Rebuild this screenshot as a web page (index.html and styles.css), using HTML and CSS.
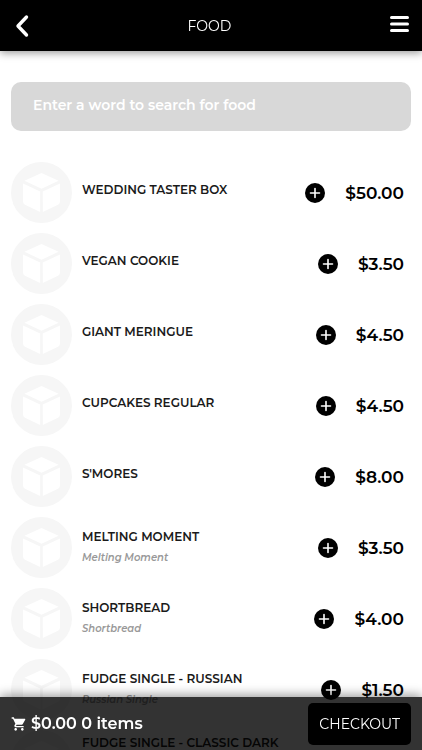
FILE: index.html
```html
<!DOCTYPE html>
<html lang="en">
<head>
    <meta charset="UTF-8">
    <meta name="viewport" content="width=device-width, initial-scale=1">
    <title>Food</title>
    <link rel="stylesheet" href="styles.css">
</head>
<body>
<!-- shared shapes -->
<svg class="defs" aria-hidden="true">
    <symbol id="box" viewBox="0 0 61 61">
        <circle cx="30.5" cy="30.5" r="30.5" fill="#f6f6f6"/>
        <path d="M30.500 11 47.500 18.800 30.500 26.800 13.500 18.800Z" fill="#fff"/>
        <path d="M12 21.500 29.200 29.500V50L14 42.700Q12 41.700 12 39.500Z" fill="#fff"/>
        <path d="M49 21.500 31.800 29.500V50L47 42.700Q49 41.700 49 39.500Z" fill="#fff"/>
    </symbol>
    <symbol id="plus" viewBox="0 0 20 20">
        <circle cx="10" cy="10" r="10" fill="#000"/>
        <path d="M10 5.500V14.500M5.500 10H14.500" stroke="#fff" stroke-width="1.6" stroke-linecap="round"/>
    </symbol>
</svg>

<header class="header">
    <button class="icon-btn" type="button" aria-label="Back">
        <svg width="14" height="22" viewBox="0 0 14 22"><path d="M11.500 2 3 11 11.500 20" fill="none" stroke="#fff" stroke-width="3.400" stroke-linecap="round" stroke-linejoin="round"/></svg>
    </button>
    <h1 class="title">FOOD</h1>
    <button class="icon-btn menu-btn" type="button" aria-label="Menu">
        <svg width="19" height="18" viewBox="0 0 19 18"><path d="M1.500 2.500H17.500M1.500 9H17.500M1.500 15.500H17.500" stroke="#fff" stroke-width="3" stroke-linecap="round"/></svg>
    </button>
</header>

<main class="content">
    <input class="search" type="search" aria-label="Search for food" placeholder="Enter a word to search for food">
    <ul class="list">
        <li class="item">
            <svg class="thumb"><use href="#box"/></svg>
            <div class="details"><h2 class="name">WEDDING TASTER BOX</h2></div>
            <button class="add" type="button" aria-label="Add"><svg><use href="#plus"/></svg></button>
            <span class="price">$50.00</span>
        </li>
        <li class="item">
            <svg class="thumb"><use href="#box"/></svg>
            <div class="details"><h2 class="name">VEGAN COOKIE</h2></div>
            <button class="add" type="button" aria-label="Add"><svg><use href="#plus"/></svg></button>
            <span class="price">$3.50</span>
        </li>
        <li class="item">
            <svg class="thumb"><use href="#box"/></svg>
            <div class="details"><h2 class="name">GIANT MERINGUE</h2></div>
            <button class="add" type="button" aria-label="Add"><svg><use href="#plus"/></svg></button>
            <span class="price">$4.50</span>
        </li>
        <li class="item">
            <svg class="thumb"><use href="#box"/></svg>
            <div class="details"><h2 class="name">CUPCAKES REGULAR</h2></div>
            <button class="add" type="button" aria-label="Add"><svg><use href="#plus"/></svg></button>
            <span class="price">$4.50</span>
        </li>
        <li class="item">
            <svg class="thumb"><use href="#box"/></svg>
            <div class="details"><h2 class="name">S'MORES</h2></div>
            <button class="add" type="button" aria-label="Add"><svg><use href="#plus"/></svg></button>
            <span class="price">$8.00</span>
        </li>
        <li class="item">
            <svg class="thumb"><use href="#box"/></svg>
            <div class="details"><h2 class="name">MELTING MOMENT</h2><p class="desc">Melting Moment</p></div>
            <button class="add" type="button" aria-label="Add"><svg><use href="#plus"/></svg></button>
            <span class="price">$3.50</span>
        </li>
        <li class="item">
            <svg class="thumb"><use href="#box"/></svg>
            <div class="details"><h2 class="name">SHORTBREAD</h2><p class="desc">Shortbread</p></div>
            <button class="add" type="button" aria-label="Add"><svg><use href="#plus"/></svg></button>
            <span class="price">$4.00</span>
        </li>
        <li class="item">
            <svg class="thumb"><use href="#box"/></svg>
            <div class="details"><h2 class="name">FUDGE SINGLE - RUSSIAN</h2><p class="desc">Russian Single</p></div>
            <button class="add" type="button" aria-label="Add"><svg><use href="#plus"/></svg></button>
            <span class="price">$1.50</span>
        </li>
        <li class="item">
            <svg class="thumb"><use href="#box"/></svg>
            <div class="details details-long"><h2 class="name">FUDGE SINGLE - CLASSIC DARK</h2></div>
        </li>
    </ul>
</main>

<footer class="footer">
    <svg class="cart" viewBox="0 0 24 24"><path fill="#fff" d="M7 18c-1.1 0-2 .9-2 2s.9 2 2 2 2-.9 2-2-.9-2-2-2zM1 2v2h2l3.6 7.6-1.4 2.4C4.500 15.400 5.500 17 7 17h12v-2H7.400l1.100-2h7.500c.7 0 1.400-.4 1.700-1L21.300 5.500C21.700 4.800 21.200 4 20.400 4H5.200L4.300 2H1zM17 18c-1.100 0-2 .9-2 2s.9 2 2 2 2-.9 2-2-.9-2-2-2z"/></svg>
    <span class="total">$0.00 0 items</span>
    <button class="checkout" type="button">CHECKOUT</button>
</footer>
</body>
</html>
```

FILE: styles.css
```css
*{
    box-sizing: border-box;
    margin: 0;
    padding: 0;
}
body{
    height: 100vh;
    overflow: hidden;
    background: #fff;
    color: #000;
    font-family: Montserrat, Inter, "Open Sans", sans-serif;
}
button{
    border: 0;
    background: none;
    font-family: inherit;
    cursor: pointer;
}
svg{
    display: block;
}
.defs{
    position: absolute;
    width: 0;
    height: 0;
}

/* top bar */
.header{
    position: fixed;
    top: 0;
    left: 0;
    right: 0;
    z-index: 2;
    display: flex;
    align-items: center;
    justify-content: space-between;
    height: 51px;
    padding: 0 13px 0 15px;
    background: #000;
    box-shadow: 0 2px 8px rgba(0,0,0,0.4);
}
.title{
    color: #fff;
    font-size: 14px;
    font-weight: 400;
}
.icon-btn svg{
    overflow: visible;
}
.menu-btn{
    padding-bottom: 3px;
}

/* list */
.content{
    height: 100vh;
    padding: 82px 11px 53px;
    overflow-y: auto;
    scrollbar-width: none;
}
.search{
    display: block;
    width: 100%;
    height: 49px;
    padding: 0 22px 4px;
    border: 0;
    border-radius: 10px;
    outline: none;
    background: #d8d8d8;
    color: #fff;
    font-family: inherit;
    font-size: 14px;
    font-weight: 600;
    appearance: none;
}
.search::placeholder{
    color: #fff;
    opacity: 1;
}
.list{
    margin-top: 26px;
    list-style: none;
}
.item{
    display: flex;
    align-items: center;
    min-height: 71px;
    padding-right: 7px;
}
.thumb{
    flex: none;
    width: 61px;
    height: 61px;
    margin-right: 10px;
}
.details{
    flex: 1;
    min-width: 0;
}
.name{
    color: #1a1a1a;
    font-size: 12px;
    font-weight: 600;
    line-height: 20px;
}
.name:last-child{
    margin-bottom: 6px;
}
.details-long .name{
    margin-bottom: 36px;
}
.desc{
    color: #999;
    font-size: 10px;
    font-style: italic;
    font-weight: 600;
    line-height: 22px;
}
.add svg{
    width: 20px;
    height: 20px;
}
.price{
    margin-left: 20px;
    font-size: 17px;
    font-weight: 600;
}

/* cart bar */
.footer{
    position: fixed;
    bottom: 0;
    left: 0;
    right: 0;
    z-index: 2;
    display: flex;
    align-items: center;
    height: 53px;
    padding: 0 11px;
    background: rgba(0,0,0,0.8);
    box-shadow: 0 -2px 10px rgba(0,0,0,0.4);
}
.cart{
    width: 16px;
    height: 16px;
    margin-right: 4px;
}
.total{
    flex: 1;
    color: #fff;
    font-size: 16px;
    font-weight: 600;
}
.checkout{
    height: 42px;
    padding: 0 11px;
    border-radius: 5px;
    background: #000;
    color: #fff;
    font-size: 14px;
    font-weight: 400;
}
```
